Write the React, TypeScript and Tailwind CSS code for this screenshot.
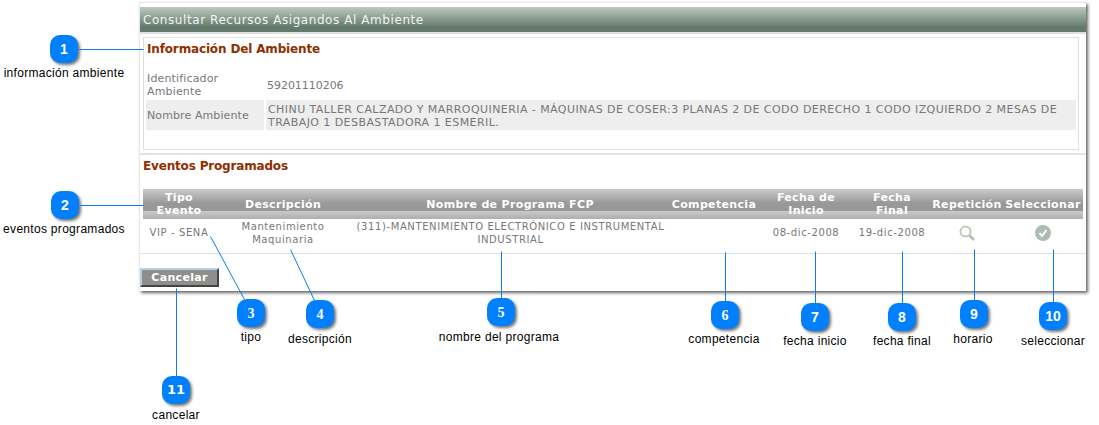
const verdana = "font-['DejaVu_Sans',sans-serif]";

type Pin = { n: number; x: number; y: number; label: string; labelX: number; labelY: number; face: string };

const sans = "font-['Liberation_Sans',sans-serif] text-[14px]";
const serif = "font-['Liberation_Serif',serif] text-[14px]";
const wide = "font-['DejaVu_Sans',sans-serif] text-[13px]";

const pins: Pin[] = [
  { n: 1, x: 50, y: 35, label: "información ambiente", labelX: 64, labelY: 73, face: sans },
  { n: 2, x: 51, y: 191, label: "eventos programados", labelX: 64, labelY: 229, face: sans },
  { n: 3, x: 237, y: 299, label: "tipo", labelX: 251, labelY: 337, face: serif },
  { n: 4, x: 306, y: 300, label: "descripción", labelX: 320, labelY: 339, face: serif },
  { n: 5, x: 487, y: 298, label: "nombre del programa", labelX: 499, labelY: 337, face: serif },
  { n: 6, x: 711, y: 301, label: "competencia", labelX: 724, labelY: 339, face: serif },
  { n: 7, x: 801, y: 303, label: "fecha inicio", labelX: 815, labelY: 341, face: sans },
  { n: 8, x: 888, y: 303, label: "fecha final", labelX: 902, labelY: 341, face: sans },
  { n: 9, x: 960, y: 300, label: "horario", labelX: 973, labelY: 339, face: sans },
  { n: 10, x: 1039, y: 302, label: "seleccionar", labelX: 1053, labelY: 341, face: sans },
  { n: 11, x: 162, y: 376, label: "cancelar", labelX: 176, labelY: 415, face: wide },
];

const lines = [
  [78, 49, 143, 49],
  [79, 205, 143, 205],
  [210, 236, 244, 299],
  [290, 249, 314, 300],
  [501, 251, 501, 298],
  [725, 252, 725, 301],
  [815, 251, 815, 303],
  [902, 251, 902, 303],
  [974, 249, 974, 300],
  [1053, 249, 1053, 302],
  [176, 288, 176, 376],
];

const columns = [
  { title: "Tipo\nEvento", w: "w-[72px]" },
  { title: "Descripción", w: "w-[136px]" },
  { title: "Nombre de Programa FCP", w: "w-[318px]" },
  { title: "Competencia", w: "w-[90px]" },
  { title: "Fecha de\nInicio", w: "w-[94px]" },
  { title: "Fecha\nFinal", w: "w-[78px]" },
  { title: "Repetición", w: "w-[72px]" },
  { title: "Seleccionar", w: "w-[80px]" },
];

function SearchIcon() {
  return (
    <svg width="16" height="16" viewBox="0 0 16 16" fill="none">
      <circle cx="6.5" cy="6.5" r="5" stroke="#bccabf" strokeWidth="2" />
      <path d="M10.5 10.5 L15 15" stroke="#b0bfb4" strokeWidth="2.5" />
    </svg>
  );
}

function CheckIcon() {
  return (
    <svg width="16" height="16" viewBox="0 0 16 16">
      <circle cx="8" cy="8" r="8" fill="#adbcb1" />
      <path d="M4.5 8.2 L7 11 L11.5 5" stroke="#fff" strokeWidth="2" fill="none" />
    </svg>
  );
}

export default function App() {
  return (
    <div className="relative h-[425px] w-[1099px] overflow-hidden bg-white">
      {/* panel */}
      <div className={`${verdana} ml-[139px] mt-[2px] h-[289px] w-[947px] border-t border-l border-[#e8e8e8] bg-white pt-[4px] shadow-[2px_2px_3px_#666]`}>
        <div className="flex h-[25px] items-center bg-[linear-gradient(180deg,#bccabf_0%,#64796c_80%,#64796c_100%)] pl-[3px] text-[12px] tracking-[0.57px] text-[#f2f5f2]">
          Consultar Recursos Asigandos Al Ambiente
        </div>
        <div className="h-[2px] bg-[#e0e0e0]" />
        <div className="ml-[3px] mt-[3px] h-[113px] w-[936px] border border-[#e0e0e0] px-[2px]">
          <div className="pl-[1px] pt-[3px] text-[12px] font-bold leading-[16px] tracking-[-0.15px] text-[#8e2f00]">
            Información Del Ambiente
          </div>
          <div className="mt-[13px] flex h-[30px] items-center text-[11px] leading-[13px] text-[#777]">
            <div className="w-[121px] pl-[1px] tracking-[0.15px]">Identificador<br />Ambiente</div>
            <div className="tracking-[-0.04px]">59201110206</div>
          </div>
          <div className="flex h-[30px] gap-[2px] text-[11px] leading-[13px] text-[#777]">
            <div className="flex w-[118px] items-center bg-[#eeeeee] pl-[1px] pt-[1px] tracking-[0.1px]">Nombre Ambiente</div>
            <div className="flex flex-1 items-center bg-[#eeeeee] pl-[2px] pt-[1px] tracking-[0.43px]">
              CHINU TALLER CALZADO Y MARROQUINERIA - MÁQUINAS DE COSER:3 PLANAS 2 DE CODO DERECHO 1 CODO IZQUIERDO 2 MESAS DE TRABAJO 1 DESBASTADORA 1 ESMERIL.
            </div>
          </div>
        </div>
        <div className="mt-[3px] h-[2px] bg-[#e4e4e4]" />
        <div className="pl-[3px] pt-[3px] text-[12px] font-bold leading-[16px] tracking-[-0.17px] text-[#8e2f00]">
          Eventos Programados
        </div>
        {/* table */}
        <div className="ml-[3px] mt-[15px] w-[940px]">
          <div className="flex h-[30px] items-center bg-[linear-gradient(180deg,#cacaca_0%,#989898_65%,#989898_100%)] bg-[length:100%_22px] text-center text-[11px] font-bold leading-[13px] tracking-[0.34px] text-white">
            {columns.map((c) => (
              <div key={c.title} className={`${c.w} shrink-0 whitespace-pre-line`}>{c.title}</div>
            ))}
          </div>
        </div>
        <div className="flex h-[35px] items-center border-b border-[#e0e0e0] pb-[7px] pl-[3px] text-center text-[10px] leading-[13px] tracking-[0.6px] text-[#777]">
          <div className="w-[72px] shrink-0">VIP - SENA</div>
          <div className="w-[136px] shrink-0">Mantenimiento<br />Maquinaria</div>
          <div className="w-[318px] shrink-0 pl-[1px]">(311)-MANTENIMIENTO ELECTRÓNICO E INSTRUMENTAL INDUSTRIAL</div>
          <div className="w-[90px] shrink-0" />
          <div className="w-[94px] shrink-0">08-dic-2008</div>
          <div className="w-[78px] shrink-0">19-dic-2008</div>
          <div className="flex w-[72px] shrink-0 justify-center"><SearchIcon /></div>
          <div className="flex w-[80px] shrink-0 justify-center"><CheckIcon /></div>
        </div>
        <button className="ml-0 mt-[14px] flex h-[19px] w-[79px] items-center justify-center border-2 border-t-[#b5d0e4] border-r-[#444] border-b-[#444] border-l-[#b5d0e4] bg-[#8e8e8e] pt-[1px] text-[11px] font-bold tracking-[0.3px] text-white">
          Cancelar
        </button>
      </div>

      {/* connectors */}
      <svg className="absolute left-0 top-0" width="1099" height="425">
        {lines.map(([x1, y1, x2, y2], i) => (
          <line key={i} x1={x1 + 0.5} y1={y1 + 0.5} x2={x2 + 0.5} y2={y2 + 0.5} stroke="#0a7cf0" strokeWidth="1" />
        ))}
      </svg>

      {pins.map((p) => (
        <div key={p.n}>
          <div
            className={`absolute flex h-[28px] w-[28px] items-center justify-center rounded-[10px] bg-[#007fff] font-bold text-white shadow-[2px_2px_3px_#777] ${p.face}`}
            style={{ left: p.x, top: p.y }}
          >
            {p.n}
          </div>
          <div
            className="absolute -translate-x-1/2 -translate-y-1/2 whitespace-nowrap font-['Liberation_Sans',sans-serif] text-[12px] tracking-[0.3px] text-black"
            style={{ left: p.labelX, top: p.labelY }}
          >
            {p.label}
          </div>
        </div>
      ))}
    </div>
  );
}
